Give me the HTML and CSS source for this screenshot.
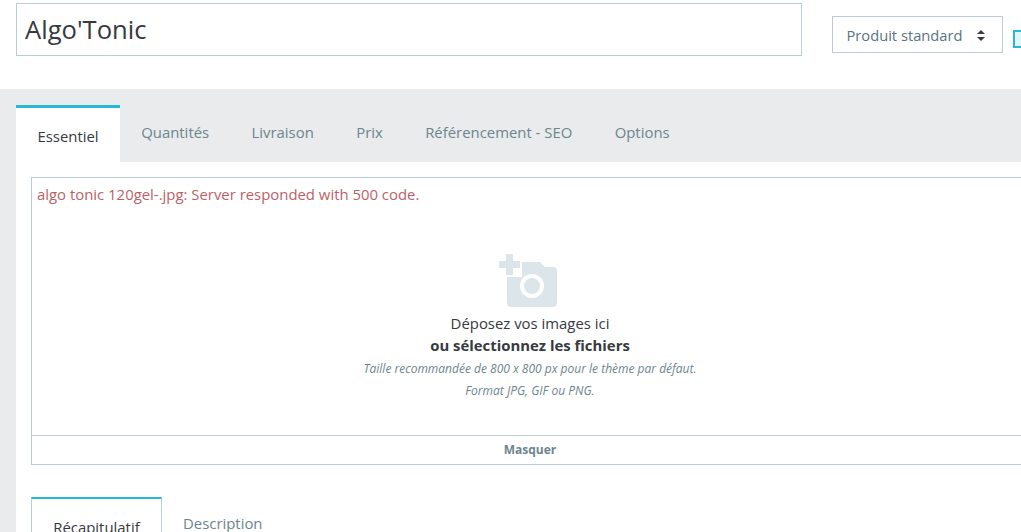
FILE: index.html
```html
<!DOCTYPE html>
<html lang="fr">
<head>
<meta charset="utf-8">
<title>Algo'Tonic</title>
<link rel="stylesheet" href="styles.css">
</head>
<body>
<div class="page">
  <header class="header">
    <div class="title-input">Algo'Tonic</div>
    <div class="select">
      <span>Produit standard</span>
      <svg class="select-arrows" width="8" height="11" viewBox="0 0 8 11"><path d="M4 0 8 4H0ZM4 11 0 7H8Z" fill="#363a41"/></svg>
    </div>
    <div class="help-box"></div>
  </header>
  <main class="panel">
    <nav class="tabs">
      <div class="tab active">Essentiel</div>
      <div class="tab">Quantités</div>
      <div class="tab">Livraison</div>
      <div class="tab">Prix</div>
      <div class="tab">Référencement - SEO</div>
      <div class="tab">Options</div>
    </nav>
    <section class="content">
      <div class="dropzone">
        <div class="drop-area">
          <p class="error">algo tonic 120gel-.jpg: Server responded with 500 code.</p>
          <svg class="camera" width="59" height="54" viewBox="0 0 59 54">
            <path d="M7 0h7v7h7v7h-7v7H7v-7H0V7h7Z" fill="#dce6ea"/>
            <path fill-rule="evenodd" fill="#dce6ea" d="M23 8H41l5 5h8a4 4 0 0 1 4 4v32a4 4 0 0 1-4 4H12a4 4 0 0 1-4-4V23h15ZM33 20a12 12 0 1 0 0 24 12 12 0 0 0 0-24Zm0 4a8 8 0 1 1 0 16 8 8 0 0 1 0-16Z"/>
          </svg>
          <p class="drop-line">Déposez vos images ici</p>
          <p class="drop-line strong">ou sélectionnez les fichiers</p>
          <p class="hint first">Taille recommandée de 800 x 800 px pour le thème par défaut.</p>
          <p class="hint">Format JPG, GIF ou PNG.</p>
        </div>
        <div class="hide-bar">Masquer</div>
      </div>
      <nav class="subtabs">
        <div class="subtab active">Récapitulatif</div>
        <div class="subtab">Description</div>
      </nav>
    </section>
  </main>
</div>
</body>
</html>
```
FILE: styles.css
```css
* { box-sizing: border-box; }
html, body { margin: 0; height: 532px; overflow: hidden; background: #fff; }
body { font-family: "Open Sans", sans-serif; font-size: 14.9px; color: #363a41; }
p { margin: 0; }
.page { width: 1021px; height: 532px; overflow: hidden; display: flex; flex-direction: column; }

.header { height: 89px; flex: none; padding: 3px 0 0 16px; display: flex; align-items: flex-start; }
.title-input { width: 786px; height: 53px; border: 1px solid #bbcdd2; padding: 8px 8px 0; font-size: 25.6px; line-height: 35px; color: #363a41; flex: none; }
.select { flex: none; width: 171px; height: 37px; margin: 13px 0 0 30px; border: 1px solid #bbcdd2; padding: 1px 14px 0 13.500px; display: flex; align-items: center; justify-content: space-between; color: #5a7480; font-size: 14.7px; }
.select-arrows { margin-right: 3px; }
.help-box { flex: none; width: 20px; height: 18px; margin: 27px 0 0 10px; border: 2px solid #25b9d7; background: #e0f4f9; }

.panel { flex: 1; min-height: 0; background: #eaebec; padding: 16px 0 0 16px; display: flex; flex-direction: column; }
.tabs { display: flex; height: 57px; flex: none; }
.tab { padding: 17px 21.200px 0; color: #6c868e; line-height: 21px; }
.tab.active { width: 104px; background: #fff; border-top: 3px solid #25b9d7; color: #363a41; padding: 18px 0 0; text-align: center; }

.content { flex: 1; background: #fff; padding: 15px 0 0 15px; width: 1100px; }
.dropzone { height: 288px; width: 1100px; border: 1px solid #bbcdd2; display: flex; flex-direction: column; }
.drop-area { flex: 1; width: 996px; padding: 6px 5px 0; display: flex; flex-direction: column; align-items: center; }
.error { align-self: flex-start; color: #bd5f68; line-height: 21px; }
.camera { margin-top: 49px; display: block; margin-right: 3px; }
.drop-line { line-height: 21px; margin-top: 5px; }
.drop-line.strong { font-weight: 700; margin-top: 1px; }
.hint { font-size: 12px; font-style: italic; color: #6c868e; line-height: 16px; margin-top: 6px; }
.hint.first { margin-top: 5px; }
.hide-bar { height: 29px; width: 996px; flex: none; border-top: 1px solid #bbcdd2; text-align: center; font-size: 12px; font-weight: 700; color: #6c868e; line-height: 28px; }

.subtabs { display: flex; margin-top: 32px; }
.subtab { padding: 16px 21px 0; color: #6c868e; line-height: 21px; height: 40px; }
.subtab.active { width: 131px; padding: 18px 0 0; text-align: center; border: 1px solid #bbcdd2; border-top: 2px solid #25b9d7; border-bottom: 0; color: #363a41; }
```
